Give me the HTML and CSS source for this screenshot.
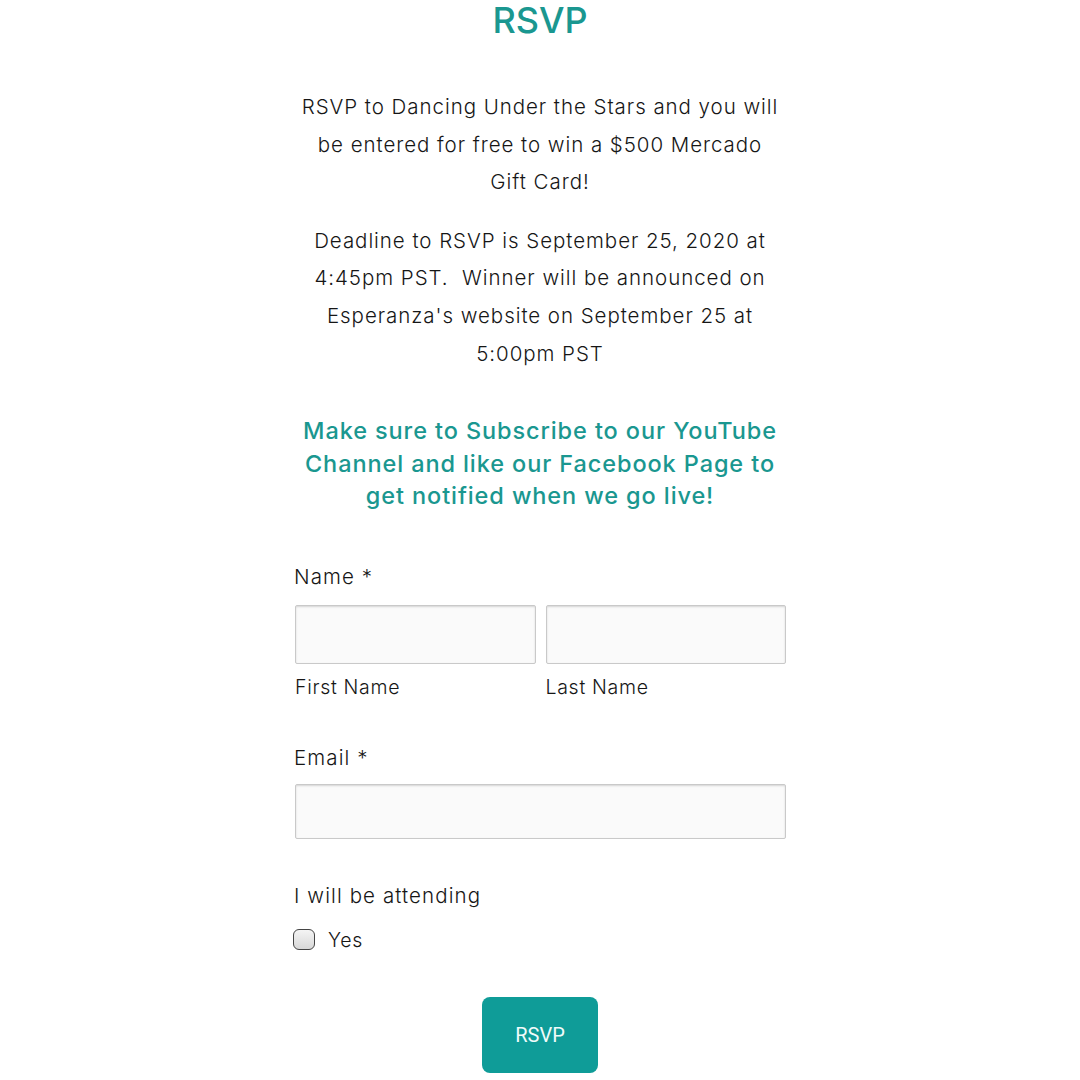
FILE: index.html
```html
<!DOCTYPE html>
<html>
<head lang="en">
    <meta charset="UTF-8">
    <title>RSVP</title>
    <link rel="stylesheet" href="styles.css">
</head>
<body>
<div id="page">
    <h1 class="title">RSVP</h1>
    <p class="intro">RSVP to Dancing Under the Stars and you will be entered for free to win a $500 Mercado Gift Card!</p>
    <p class="intro">Deadline to RSVP is September 25, 2020 at 4:45pm PST.&nbsp; Winner will be announced on Esperanza's website on September 25 at 5:00pm PST</p>
    <h2 class="notice">Make sure to Subscribe to our YouTube Channel and like our Facebook Page to get notified when we go live!</h2>

    <form class="form">
        <div class="field">
            <label class="label">Name *</label>
            <div class="name-row">
                <div class="name-col">
                    <input class="box" type="text">
                    <span class="sub">First Name</span>
                </div>
                <div class="name-col">
                    <input class="box" type="text">
                    <span class="sub">Last Name</span>
                </div>
            </div>
        </div>
        <div class="field field-email">
            <label class="label">Email *</label>
            <input class="box box-email" type="text">
        </div>
        <div class="field field-attend">
            <span class="label">I will be attending</span>
            <label class="check"><span class="check-box"></span>Yes</label>
        </div>
        <div class="actions">
            <button class="btn" type="button">RSVP</button>
        </div>
    </form>
</div>
</body>
</html>
```

FILE: styles.css
```css
*{
    margin: 0;
    padding: 0;
    box-sizing: border-box;
}
body{
    background: #fff;
    color: #161616;
    font-family: "Inter", "Liberation Sans", sans-serif;
    font-weight: 300;
}
#page{
    width: 492px;
    margin: 0 auto;
    display: flex;
    flex-direction: column;
}
.title{
    font-family: "Inter", "Liberation Sans", sans-serif;
    font-weight: 500;
    font-size: 36px;
    line-height: 40px;
    color: #1a9790;
    text-align: center;
}
.intro{
    font-size: 20.5px;
    line-height: 37.6px;
    letter-spacing: 0.95px;
    text-align: center;
    margin-top: 48px;
    padding: 0 4px;
}
.intro + .intro{
    margin-top: 21px;
}
.notice{
    font-size: 23.5px;
    line-height: 32.5px;
    letter-spacing: 0.9px;
    font-weight: 500;
    color: #1a9790;
    text-align: center;
    margin-top: 43px;
}
.form{
    display: flex;
    flex-direction: column;
    margin-top: 49px;
}
.field{
    display: flex;
    flex-direction: column;
}
.label{
    font-size: 20.5px;
    line-height: 30px;
    letter-spacing: 1.1px;
    margin-bottom: 13px;
}
.name-row{
    display: flex;
    gap: 10px;
    padding-left: 1px;
}
.name-col{
    flex: 1;
    display: flex;
    flex-direction: column;
}
.box{
    height: 59px;
    width: 100%;
    background: #fafafa;
    border: 1px solid #c9c9c9;
    border-radius: 2px;
    box-shadow: inset 0 1px 2px rgba(0,0,0,0.15);
}
.sub{
    font-size: 19.5px;
    line-height: 26px;
    letter-spacing: 0.7px;
    margin-top: 10px;
}
.field-email{
    margin-top: 43px;
}
.label + .box-email{
    margin-top: -2px;
}
.box-email{
    height: 55px;
    margin-left: 1px;
    width: calc(100% - 1px);
}
.field-attend{
    margin-top: 42px;
}
.check{
    display: flex;
    align-items: center;
    gap: 13px;
    font-size: 19.5px;
    line-height: 24px;
    letter-spacing: 0.7px;
    margin-top: 4px;
    margin-left: -1px;
}
.check-box{
    width: 22px;
    height: 21px;
    border: 1.5px solid #444;
    border-radius: 6px;
    background: linear-gradient(#f4f4f4, #d8d8d8);
}
.actions{
    display: flex;
    justify-content: center;
    margin-top: 45px;
}
.btn{
    width: 116px;
    height: 76px;
    background: #0f9c98;
    color: #f0fbfa;
    border: none;
    border-radius: 8px;
    font-family: "Roboto", "Liberation Sans", sans-serif;
    font-size: 20px;
    font-weight: 400;
}
```
